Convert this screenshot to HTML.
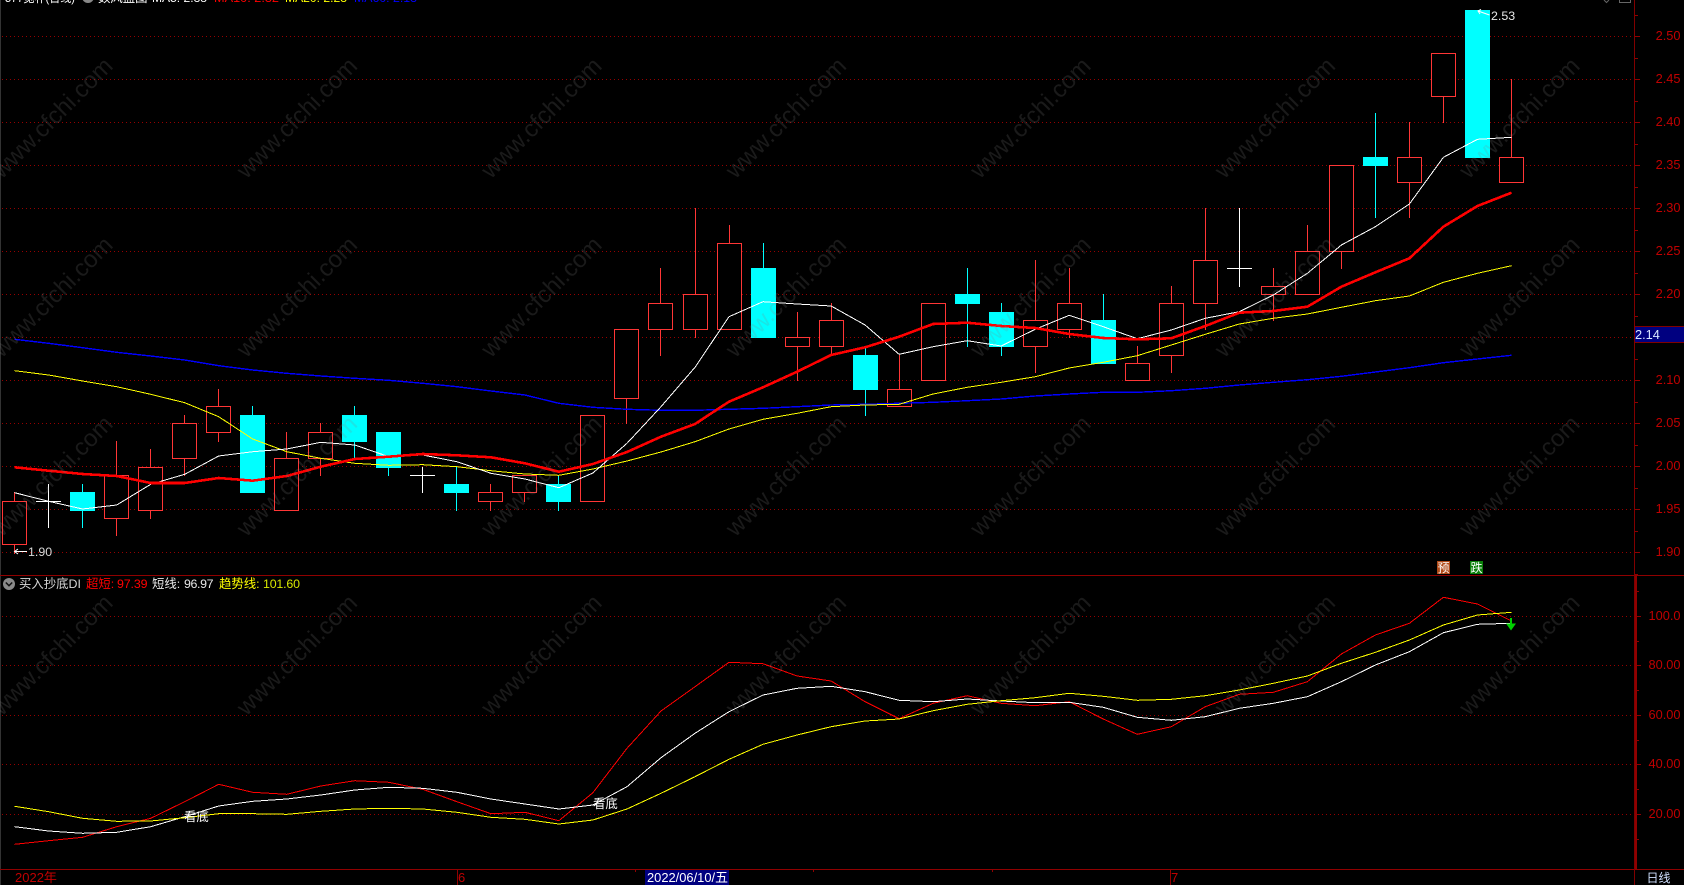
<!DOCTYPE html>
<html lang="zh">
<head>
<meta charset="utf-8">
<title>K线图</title>
<style>
html,body{margin:0;padding:0;background:#000;width:1684px;height:885px;overflow:hidden}
svg{position:absolute;left:0;top:0;display:block}
text{font-family:"Liberation Sans","Noto Sans CJK SC",sans-serif;font-size:12.4px}
.ax{fill:#c00000;text-anchor:end;font-size:12.8px}
.wm text{font-size:24px;fill:#808080;text-anchor:middle}
</style>
</head>
<body>
<svg id="c" xmlns="http://www.w3.org/2000/svg" width="1684" height="885" viewBox="0 0 1684 885">
<rect width="1684" height="885" fill="#000"/>
<g id="grid" shape-rendering="crispEdges"></g>
<g id="candles" shape-rendering="crispEdges"></g>
<g id="lines" fill="none" shape-rendering="crispEdges"></g>

<!-- frame -->
<g shape-rendering="crispEdges">
<rect x="0" y="0" width="1" height="885" fill="#333"/>
<rect x="0" y="575" width="1684" height="1" fill="#900000"/>
<rect x="0" y="869" width="1684" height="1" fill="#900000"/>
<rect x="1634" y="0" width="1" height="885" fill="#800000"/>
<rect x="1635" y="575" width="2" height="295" fill="#900000"/>
<rect x="457" y="869" width="1" height="16" fill="#900000"/>
<rect x="1170" y="869" width="1" height="16" fill="#900000"/>
<rect x="635" y="870" width="1" height="2" fill="#900000"/>
<rect x="813" y="870" width="1" height="2" fill="#900000"/>
<rect x="992" y="870" width="1" height="2" fill="#900000"/>
<rect x="645" y="870" width="84" height="15" fill="#000080"/>
<rect x="1635" y="327" width="49" height="16" fill="#000080"/>
<rect x="1635" y="326" width="49" height="1" fill="#800000"/>
<rect x="1635" y="342" width="49" height="1" fill="#800000"/>
</g>

<!-- axis labels main -->
<text class="ax" x="1680.500" y="40">2.50</text>
<text class="ax" x="1680.500" y="83">2.45</text>
<text class="ax" x="1680.500" y="126">2.40</text>
<text class="ax" x="1680.500" y="169">2.35</text>
<text class="ax" x="1680.500" y="212">2.30</text>
<text class="ax" x="1680.500" y="255">2.25</text>
<text class="ax" x="1680.500" y="298">2.20</text>
<text class="ax" x="1680.500" y="384">2.10</text>
<text class="ax" x="1680.500" y="427">2.05</text>
<text class="ax" x="1680.500" y="470">2.00</text>
<text class="ax" x="1680.500" y="513">1.95</text>
<text class="ax" x="1680.500" y="556">1.90</text>
<text x="1635" y="339" fill="#d8e4ff" style="font-size:12.8px">2.14</text>

<!-- axis labels sub -->
<text class="ax" x="1680.500" y="620">100.0</text>
<text class="ax" x="1680.500" y="669">80.00</text>
<text class="ax" x="1680.500" y="719">60.00</text>
<text class="ax" x="1680.500" y="768">40.00</text>
<text class="ax" x="1680.500" y="818">20.00</text>

<!-- top header (clipped by window top) -->
<text x="5" y="2" fill="#fff" textLength="70" lengthAdjust="spacingAndGlyphs">577宽朴(日线)</text>
<circle cx="88" cy="-3" r="6" fill="#888"/>
<text x="98" y="2" fill="#fff">数风蓝图</text>
<text x="152" y="2" fill="#fff" textLength="55" lengthAdjust="spacingAndGlyphs">MA5: 2.38</text>
<text x="214" y="2" fill="#f00" textLength="65" lengthAdjust="spacingAndGlyphs">MA10: 2.32</text>
<text x="285" y="2" fill="#ff0" textLength="62" lengthAdjust="spacingAndGlyphs">MA20: 2.23</text>
<text x="354" y="2" fill="#00f" textLength="63" lengthAdjust="spacingAndGlyphs">MA60: 2.13</text>

<!-- top right window icons -->
<path d="M1604 0l2.500 2.500 2.500-2.500" fill="none" stroke="#666"/>
<path d="M1619.500 0v2.500h11v-2.500" fill="none" stroke="#666"/>

<!-- sub header -->
<circle cx="9" cy="584" r="6" fill="#8a8a8a"/>
<path d="M5.800 582.500L9 585.700 12.200 582.500" fill="none" stroke="#111" stroke-width="1.500"/>
<text x="19" y="588" fill="#d8d8d8">买入抄底DI</text>
<text x="86" y="588" fill="#f00">超短:</text>
<text x="117" y="588" fill="#f00" textLength="30.500">97.39</text>
<text x="152" y="588" fill="#e8e8e8">短线:</text>
<text x="184" y="588" fill="#e8e8e8" textLength="29.500">96.97</text>
<text x="219" y="588" fill="#ff0">趋势线:</text>
<text x="263" y="588" fill="#d8e800" textLength="37">101.60</text>

<!-- chart annotations -->
<text x="184" y="821" fill="#fff">看底</text>
<text x="593" y="808" fill="#fff">看底</text>
<path d="M14.500 551.500H27M18 549l-3.500 2.500 3.500 2.500" fill="none" stroke="#fff"/>
<text x="28" y="556" fill="#d8d8d8" style="font-size:12.4px">1.90</text>
<path d="M1478 11L1489.500 15M1481 9.500l-3 1.500 2 3" fill="none" stroke="#fff"/>
<text x="1491" y="20" fill="#e8e8e8" style="font-size:12.4px">2.53</text>

<!-- signal badges -->
<g shape-rendering="crispEdges">
<rect x="1437" y="561" width="13" height="13" fill="#b04a18"/>
<rect x="1470" y="561" width="13" height="13" fill="#0a800a"/>
</g>
<text x="1437.500" y="572" fill="#fff" style="font-size:12px">预</text>
<text x="1470.500" y="572" fill="#fff" style="font-size:12px">跌</text>

<!-- green arrow -->
<g shape-rendering="crispEdges">
<rect x="1510" y="618" width="2" height="7" fill="#00d000"/>
</g>
<path d="M1506 623.500H1516L1511 630.500Z" fill="#00d000"/>

<!-- bottom bar -->
<text x="15" y="882" fill="#c00000" style="font-size:13px">2022年</text>
<text x="458" y="882" fill="#c00000" style="font-size:13px">6</text>
<text x="1171" y="882" fill="#c00000" style="font-size:13px">7</text>
<text x="647" y="882" fill="#fff" textLength="81" lengthAdjust="spacingAndGlyphs" style="font-size:13px">2022/06/10/五</text>
<text x="1646.500" y="882" fill="#d0e0ff" style="font-size:12px">日线</text>

<!-- watermark -->
<g class="wm" opacity=".2">
<text x="52" y="126" transform="rotate(-45 52 117.500)">www.cfchi.com</text>
<text x="296.500" y="126" transform="rotate(-45 296.500 117.500)">www.cfchi.com</text>
<text x="541" y="126" transform="rotate(-45 541 117.500)">www.cfchi.com</text>
<text x="785.500" y="126" transform="rotate(-45 785.500 117.500)">www.cfchi.com</text>
<text x="1030" y="126" transform="rotate(-45 1030 117.500)">www.cfchi.com</text>
<text x="1274.500" y="126" transform="rotate(-45 1274.500 117.500)">www.cfchi.com</text>
<text x="1519" y="126" transform="rotate(-45 1519 117.500)">www.cfchi.com</text>
<text x="52" y="305" transform="rotate(-45 52 296.500)">www.cfchi.com</text>
<text x="296.500" y="305" transform="rotate(-45 296.500 296.500)">www.cfchi.com</text>
<text x="541" y="305" transform="rotate(-45 541 296.500)">www.cfchi.com</text>
<text x="785.500" y="305" transform="rotate(-45 785.500 296.500)">www.cfchi.com</text>
<text x="1030" y="305" transform="rotate(-45 1030 296.500)">www.cfchi.com</text>
<text x="1274.500" y="305" transform="rotate(-45 1274.500 296.500)">www.cfchi.com</text>
<text x="1519" y="305" transform="rotate(-45 1519 296.500)">www.cfchi.com</text>
<text x="52" y="484" transform="rotate(-45 52 475.500)">www.cfchi.com</text>
<text x="296.500" y="484" transform="rotate(-45 296.500 475.500)">www.cfchi.com</text>
<text x="541" y="484" transform="rotate(-45 541 475.500)">www.cfchi.com</text>
<text x="785.500" y="484" transform="rotate(-45 785.500 475.500)">www.cfchi.com</text>
<text x="1030" y="484" transform="rotate(-45 1030 475.500)">www.cfchi.com</text>
<text x="1274.500" y="484" transform="rotate(-45 1274.500 475.500)">www.cfchi.com</text>
<text x="1519" y="484" transform="rotate(-45 1519 475.500)">www.cfchi.com</text>
<text x="52" y="663" transform="rotate(-45 52 654.500)">www.cfchi.com</text>
<text x="296.500" y="663" transform="rotate(-45 296.500 654.500)">www.cfchi.com</text>
<text x="541" y="663" transform="rotate(-45 541 654.500)">www.cfchi.com</text>
<text x="785.500" y="663" transform="rotate(-45 785.500 654.500)">www.cfchi.com</text>
<text x="1030" y="663" transform="rotate(-45 1030 654.500)">www.cfchi.com</text>
<text x="1274.500" y="663" transform="rotate(-45 1274.500 654.500)">www.cfchi.com</text>
<text x="1519" y="663" transform="rotate(-45 1519 654.500)">www.cfchi.com</text>
</g>
</svg>
<script>
(function(){
var NS="http://www.w3.org/2000/svg";
function el(parent,tag,attrs){var e=document.createElementNS(NS,tag);for(var k in attrs)e.setAttribute(k,attrs[k]);document.getElementById(parent).appendChild(e);return e;}
function Y(p){return 36+(250-p)*8.61;}
function X(i){return 14.6+34.02*i;}
var i,y;
/* grid + ticks, main */
for(i=0;i<13;i++){
  y=Math.floor(36.7+43*i)+.5;
  el("grid","path",{d:"M2 "+y+"H1634",stroke:"#960000","stroke-dasharray":"1 3",fill:"none"});
  el("grid","path",{d:"M1635 "+y+"H1640",stroke:"#900000",fill:"none"});
  var m=Math.floor(36.7+43*i+21.5)+.5;
  if(m<575)el("grid","path",{d:"M1635 "+m+"H1638",stroke:"#900000",fill:"none"});
  m=Math.floor(36.7+43*i-21.5)+.5;
  if(i==0)el("grid","path",{d:"M1635 "+m+"H1638",stroke:"#900000",fill:"none"});
}
/* grid + ticks, sub */
[616,665,715,764,814].forEach(function(v,n){
  y=v+.5;
  el("grid","path",{d:"M2 "+y+"H1634",stroke:"#960000","stroke-dasharray":"1 3",fill:"none"});
  el("grid","path",{d:"M1636 "+y+"H1641",stroke:"#900000",fill:"none"});
  el("grid","path",{d:"M1636 "+(v+25.5)+"H1639",stroke:"#900000",fill:"none"});
  if(n==0)el("grid","path",{d:"M1636 "+(v-24.5)+"H1639",stroke:"#900000",fill:"none"});
});
/* candles: type, high, top, bottom, low (cents) */
var C=[["r",197,196,191,190],["w",198,196,196,193],["c",198,197,195,193],["r",203,199,194,192],["r",202,200,195,194],
["r",206,205,201,199],["r",209,207,204,203],["c",207,206,197,197],["r",204,201,195,195],["r",205,204,201,199],
["c",207,206,203,201],["c",204,204,200,199],["w",200,199,199,197],["c",200,198,197,195],["r",198,197,196,195],
["r",199,199,197,196],["c",199,198,196,195],["r",206,206,196,196],["r",216,216,208,205],["r",223,219,216,213],
["r",230,220,216,215],["r",228,226,216,216],["c",226,223,215,215],["r",218,215,214,210],["r",219,217,214,213],
["c",214,213,209,206],["r",213,209,207,207],["r",219,219,210,210],["c",223,220,219,214],["c",219,218,214,213],
["r",224,217,214,211],["r",223,219,216,215],["c",220,217,212,212],["r",214,212,210,210],["r",221,219,213,211],
["r",230,224,219,216],["w",230,223,223,221],["r",223,221,220,217],["r",228,225,220,220],["r",235,235,225,223],
["c",241,236,235,229],["r",240,236,233,229],["r",248,248,243,240],["c",253,253,236,236],["r",245,236,233,233]];
C.forEach(function(k,n){
  var c=Math.floor(X(n)),col=k[0]=="r"?"#ff3636":k[0]=="c"?"#00ffff":"#ffffff";
  var h=Math.round(Y(k[1])),t=Math.round(Y(k[2])),b=Math.round(Y(k[3])),l=Math.round(Y(k[4]));
  el("candles","path",{d:"M"+(c+.5)+" "+h+"V"+(l+1),stroke:col,fill:"none"});
  if(k[0]=="w"){
    el("candles","path",{d:"M"+(c-12)+" "+(t+.5)+"H"+(c+13),stroke:col,fill:"none"});
  }else if(k[0]=="c"){
    el("candles","rect",{x:c-12,y:t,width:25,height:b-t+1,fill:col});
  }else{
    el("candles","rect",{x:c-11.5,y:t+.5,width:24,height:b-t,fill:"#000",stroke:col});
  }
});
function line(ys,col,w){
  var p=ys.map(function(v,n){return X(n).toFixed(1)+","+v;}).join(" ");
  el("lines","polyline",{points:p,stroke:col,"stroke-width":w,"stroke-linejoin":"round"});
}
/* main chart moving averages */
line([339.3,343.3,347.7,352.3,356,360,365.7,370,373.3,376,378.3,380.3,383.3,386.7,391,395,403.3,407.3,409.3,410.3,410.3,409.3,408.3,406.7,405,404.3,403.3,402.3,400.7,399,396,394,392.3,392.3,390.7,388.3,385,382.3,379.7,376.3,372,367.7,362.7,359,355.3],"#0000ff",1.4);
line([370.7,375,381,386.7,394.3,402.7,416.7,439,451.7,458.3,463.3,465.3,464.7,466.7,470.7,474,475.3,469,461,452,441.7,429,419.3,413.3,406.7,405,404.3,394,387.3,382.3,376.7,368,362.3,355.7,345,334.3,324,318.3,314,307.3,300.7,296,282.3,273.3,265.7],"#ffff00",1);
line([492.7,501.3,509,505,484.3,474.3,456,451.7,449,442.3,445,456.7,455,461.7,473.3,479,487.7,473,443.3,406.7,367.3,316.7,301.7,304,306,325,354.3,346.7,340.7,346,329.3,315.3,326.7,338.7,330,318.3,311.7,295,273.3,245,226.7,204,157.3,139.3,137.3],"#ffffff",1);
line([467.3,470.7,474,476,483,483,478,480.7,476,466.7,459,456.7,454,455.3,457.3,463.3,471.7,464,452,436.7,424,401.7,387.3,371.7,355,347.3,336.7,324,322.7,326,328,334,338,339.3,338.3,326,312.7,311,306.7,286.7,272.3,258.3,226.7,206,192.7],"#ff0000",2.6);
/* sub chart */
line([844.3,840.7,837.3,826.7,818.3,801.7,784.3,792.3,794.3,786,780.7,782.3,789.3,801.7,813.7,812.3,820.7,792.7,748.3,711,686.7,662.3,663.7,676,681,701.7,718.7,703.3,695.7,703.3,705.7,701.7,719,734.3,726.7,706.7,694.3,692.3,681.7,654,635,623.3,597.3,604,621],"#ff0000",1);
line([826.7,831,833.3,832.3,826.7,816.7,806,801.3,799,795,790,787.3,788.3,792.3,799,804,809,805,786.7,757.7,733.3,711.7,695,688.3,686.3,691.7,700.3,701.7,699,701,702.7,702.3,707.3,717.3,720.3,716.7,708.3,703.3,696.7,681.7,665,651.7,632.7,624.3,623.3],"#ffffff",1);
line([806.3,811.7,818.3,821.3,821,817.7,813.7,813.7,814.3,811.3,809,808.3,809,812.3,817.3,819.3,824,820,809,793.3,776.7,759.3,744.3,735,726.7,721,719,710.7,704.3,700.7,697.7,693.3,696.3,700.3,699.3,695.7,690,683.3,676,663.3,652.3,640,625,615,612.3],"#ffff00",1);
})();
</script>
</body>
</html>
